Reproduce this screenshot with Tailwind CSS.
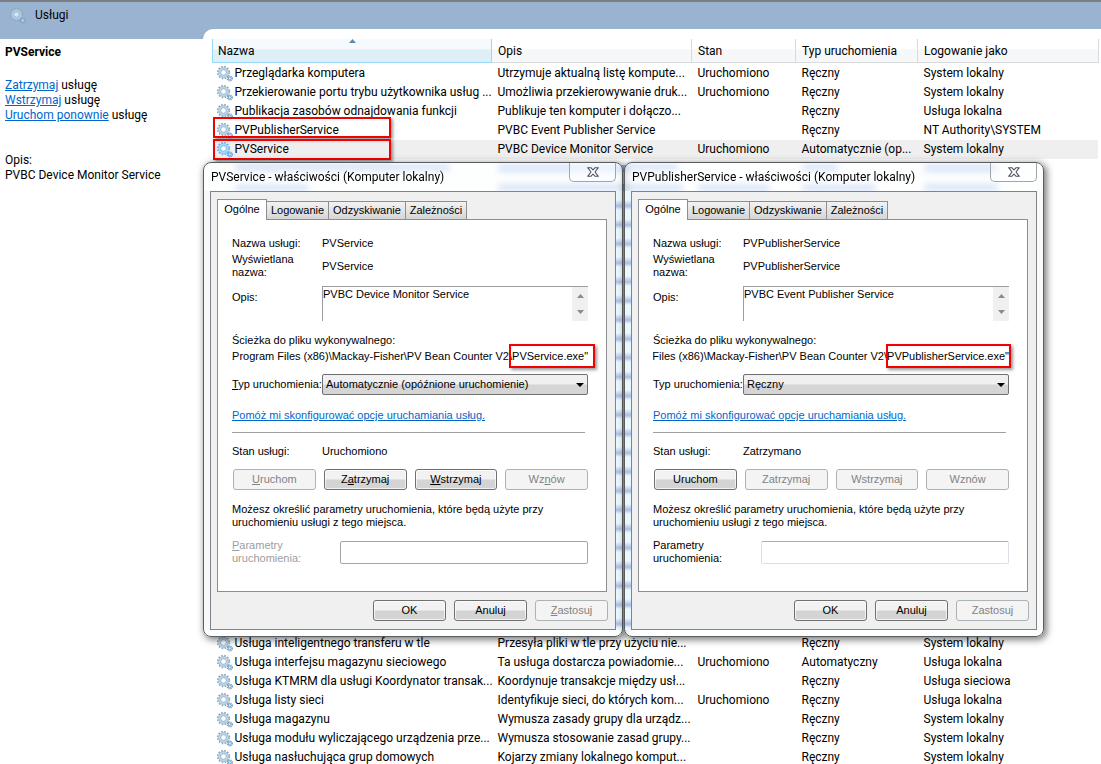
<!DOCTYPE html>
<html lang="pl">
<head>
<meta charset="utf-8">
<title>Usługi</title>
<script src="https://cdn.jsdelivr.net/npm/@tailwindcss/browser@4"></script>
</head>
<body class="relative h-screen overflow-hidden bg-white font-['Roboto','Noto_Sans',sans-serif] text-[12px] leading-[15px] text-black">
<svg class="hidden" aria-hidden="true">
  <symbol id="gear" viewBox="0 0 16 16">
    <circle cx="6.500" cy="6.500" r="5.800" fill="none" stroke="#8aa6bf" stroke-width="1.800" stroke-dasharray="1.600 1.440"/>
    <circle cx="6.500" cy="6.500" r="4" fill="none" stroke="#bcd8ea" stroke-width="2.600"/>
    <circle cx="6.500" cy="6.500" r="5" fill="none" stroke="#93b1c9" stroke-width=".6"/>
    <circle cx="6.500" cy="6.500" r="2.800" fill="#fff" fill-opacity=".8" stroke="#7f9fbb" stroke-width=".7"/>
    <circle cx="12.800" cy="12.400" r="2.500" fill="none" stroke="#6f96b8" stroke-width="1.200" stroke-dasharray="1.100 .94"/>
    <circle cx="12.800" cy="12.400" r="1.500" fill="#e4f1f9" stroke="#86b2d4" stroke-width="1.300"/>
  </symbol>
  <symbol id="close" viewBox="0 0 12 10">
    <path d="M.7.7h3.2L6 3 8.100.7h3.200L8 5l3.300 4.300H8.100L6 7 3.900 9.300H.7L4 5z" fill="#fff" stroke="#4b5060" stroke-width="1.100" stroke-linejoin="round"/>
  </symbol>
</svg>

<header class="flex h-[39px] items-start border-t-2 border-[#7d8083] bg-[#9ab3d1] pt-[6px] pl-[10px]">
  <svg class="size-4 opacity-80"><use href="#gear"/></svg>
  <h1 class="ml-[9px]">Usługi</h1>
</header>

<div class="flex">
  <aside class="w-[203px] shrink-0 pt-[6px] pl-[5px]">
    <h2 class="font-bold">PVService</h2>
    <p class="mt-[18px]"><a href="#" class="text-[#0066cc] underline">Zatrzymaj</a> usługę</p>
    <p><a href="#" class="text-[#0066cc] underline">Wstrzymaj</a> usługę</p>
    <p><a href="#" class="text-[#0066cc] underline">Uruchom ponownie</a> usługę</p>
    <p class="mt-[30px]">Opis:</p>
    <p>PVBC Device Monitor Service</p>
  </aside>
  <main class="relative -mt-[10px] min-w-0 grow rounded-tl-[10px] bg-white pt-[10px] pr-[2px] pl-[9px]">
    <table class="w-full table-fixed border-collapse text-left whitespace-nowrap">
      <colgroup><col class="w-[279px]"><col class="w-[200px]"><col class="w-[104px]"><col class="w-[122px]"><col></colgroup>
      <thead>
        <tr class="h-[23px]">
          <th class="relative border border-t-0 border-[#96d9f9] bg-linear-to-b from-[#f4fafd] from-45% to-[#dfeff8] to-46% pt-[2px] pl-[5px] font-normal">Nazwa
            <svg class="absolute top-0 left-[136px] h-[4px] w-[7px]" viewBox="0 0 7 4"><path d="M0 4 3.500 0 7 4z" fill="#5a8caf"/></svg></th>
          <th class="border-r border-b border-[#d9dadc] bg-linear-to-b from-white from-45% to-[#f6f7f8] to-46% pt-[2px] pl-[6px] font-normal">Opis</th>
          <th class="border-r border-b border-[#d9dadc] bg-linear-to-b from-white from-45% to-[#f6f7f8] to-46% pt-[2px] pl-[6px] font-normal">Stan</th>
          <th class="border-r border-b border-[#d9dadc] bg-linear-to-b from-white from-45% to-[#f6f7f8] to-46% pt-[2px] pl-[6px] font-normal">Typ uruchomienia</th>
          <th class="border-r border-b border-[#d9dadc] bg-linear-to-b from-white from-45% to-[#f6f7f8] to-46% pt-[2px] pl-[6px] font-normal">Logowanie jako</th>
        </tr>
      </thead>
      <tbody id="services"></tbody>
    </table>
    <div class="absolute top-[88px] left-[10px] h-[21px] w-[178px] border-2 border-[#f40000] shadow-[2px_2px_3px_rgba(0,0,0,0.4)]"></div>
    <div class="absolute top-[110px] left-[10px] h-[21px] w-[178px] border-2 border-[#f40000] shadow-[2px_2px_3px_rgba(0,0,0,0.4)]"></div>
  </main>
</div>

<div id="dialogs"></div>

<script>
const services = [
  ["Przeglądarka komputera", "Utrzymuje aktualną listę kompute...", "Uruchomiono", "Ręczny", "System lokalny"],
  ["Przekierowanie portu trybu użytkownika usług ...", "Umożliwia przekierowywanie druk...", "Uruchomiono", "Ręczny", "System lokalny"],
  ["Publikacja zasobów odnajdowania funkcji", "Publikuje ten komputer i dołączo...", "", "Ręczny", "Usługa lokalna"],
  ["PVPublisherService", "PVBC Event Publisher Service", "", "Ręczny", "NT Authority\\SYSTEM"],
  ["PVService", "PVBC Device Monitor Service", "Uruchomiono", "Automatycznie (op...", "System lokalny"],
  ["w-[215px]", "w-[180px]", "w-0", "w-[36px]", "w-[74px]"],
  ["w-[74px]", "w-[185px]", "w-[72px]", "w-[74px]", "w-[74px]"],
  null,
  ["Usługa inteligentnego transferu w tle", "Przesyła pliki w tle przy użyciu nie...", "", "Ręczny", "System lokalny"],
  ["Usługa interfejsu magazynu sieciowego", "Ta usługa dostarcza powiadomie...", "Uruchomiono", "Automatyczny", "Usługa lokalna"],
  ["Usługa KTMRM dla usługi Koordynator transak...", "Koordynuje transakcje między usł...", "", "Ręczny", "Usługa sieciowa"],
  ["Usługa listy sieci", "Identyfikuje sieci, do których kom...", "Uruchomiono", "Ręczny", "Usługa lokalna"],
  ["Usługa magazynu", "Wymusza zasady grupy dla urządz...", "", "Ręczny", "System lokalny"],
  ["Usługa modułu wyliczającego urządzenia prze...", "Wymusza stosowanie zasad grupy...", "", "Ręczny", "System lokalny"],
  ["Usługa nasłuchująca grup domowych", "Kojarzy zmiany lokalnego komput...", "", "Ręczny", "System lokalny"],
];

// Rows 5 and 6 only show as soft bars through the title bars' glass;
// the rows covered by the dialogs collapse into one spacer row.
const rowHtml = (s, i) => {
  if (!s) return '<tr class="h-[437px]"><td colspan="5" class="p-0"></td></tr>';
  if (i === 5 || i === 6) return `<tr class="h-[19px]" aria-hidden="true">${s.map((w, k) =>
    `<td class="p-0 ${k ? "pl-[6px]" : "pl-[22px]"}"><div class="h-[7px] ${w} rounded-full bg-[#a3c0f2]"></div></td>`).join("")}</tr>`;
  return `
  <tr class="h-[19px] ${i === 4 ? "bg-[#efefef]" : ""}">
    <td class="overflow-hidden p-0 pl-[4px]"><div class="flex items-center gap-[2px]"><svg class="size-4 shrink-0 ${i === 4 ? "saturate-200" : ""}"><use href="#gear"/></svg><span>${s[0]}</span></div></td>
    ${s.slice(1).map(c => `<td class="p-0 pl-[6px]">${c}</td>`).join("")}
  </tr>`;
};
document.getElementById("services").innerHTML =
  '<tr class="h-[2px]"><td colspan="5" class="p-0"></td></tr>' + services.map(rowHtml).join("");

const dialogs = [
  { id: "a", place: "left-[203px]", name: "PVService", desc: "PVBC Device Monitor Service",
    path: 'C:\\Program Files (x86)\\Mackay-Fisher\\PV Bean Counter V2\\PVService.exe"',
    mark: "w-[86px] -right-[7px]", type: "Automatycznie (opóźnione uruchomienie)", typeLabel: "<u>T</u>yp uruchomienia:", state: "Uruchomiono",
    actions: [["<u>U</u>ruchom", 0], ["Z<u>a</u>trzymaj", 1], ["<u>W</u>strzymaj", 1], ["Wz<u>n</u>ów", 0]],
    params: "<u>P</u>arametry<br>uruchomienia:", paramsTone: "text-[#9d9d9d]", paramsBorder: "border-[#a5a5a8]", apply: "<u>Z</u>astosuj",
    left: "bg-[#f6f8f9]", right: "bg-[repeating-linear-gradient(#eaf8fd_0px,#eaf8fd_9px,#a9bfe4_15px,#eaf8fd_19px)]" },
  { id: "b", place: "left-[624px]", name: "PVPublisherService", desc: "PVBC Event Publisher Service",
    path: 'C:\\Program Files (x86)\\Mackay-Fisher\\PV Bean Counter V2\\PVPublisherService.exe"',
    mark: "w-[125px] -right-[2px]", type: "Ręczny", typeLabel: "Typ uruchomienia:", state: "Zatrzymano",
    actions: [["Uruchom", 1], ["Zatrzymaj", 0], ["Wstrzymaj", 0], ["Wznów", 0]],
    params: "Parametry<br>uruchomienia:", paramsTone: "text-black", paramsBorder: "border-[#dcdfe6] border-t-[#a9abb4]", apply: "Zastosuj",
    left: "bg-[repeating-linear-gradient(#eaf8fd_0px,#eaf8fd_9px,#a9bfe4_15px,#eaf8fd_19px)]", right: "bg-[#fafafa]" },
];

const button = (label, on) => `<button type="button" ${on ? "" : "disabled"} class="h-[21px] rounded-[3px] border text-center ${on
  ? "border-[#707070] bg-linear-to-b from-[#f2f2f2] from-48% to-[#d4d4d4] to-52% shadow-[inset_0_0_0_1px_rgba(255,255,255,0.7)]"
  : "border-[#adb2b5] bg-[#f4f4f4] text-[#838383]"}">${label}</button>`;

document.getElementById("dialogs").innerHTML = dialogs.map(d => `
<section role="dialog" aria-labelledby="title-${d.id}" class="absolute top-[162px] ${d.place} w-[420px] overflow-clip rounded-[8px] border border-[#5a5d5f] bg-[#fbfdfe]/60 backdrop-blur-[3px] shadow-[2px_2px_7px_1px_rgba(0,0,0,0.5)]">
  <div class="flex h-[28px] items-start justify-between pr-[6px] pl-[7px]">
    <h2 id="title-${d.id}" class="mt-[7px] [text-shadow:0_0_6px_#fff,0_0_6px_#fff,0_0_4px_#fff,0_0_8px_#fff]">${d.name} - właściwości (Komputer lokalny)</h2>
    <button type="button" aria-label="Zamknij" class="flex h-[19px] w-[47px] items-center justify-center rounded-b-[5px] border border-t-0 border-[#a0a5aa] bg-white/40"><svg class="h-[10px] w-[12px]"><use href="#close"/></svg></button>
  </div>
  <div class="flex font-['Liberation_Sans',sans-serif] text-[11px] leading-[13px]">
    <div class="w-[6px] shrink-0 ${d.left}"></div>
    <div class="min-w-0 grow border border-[#808489] bg-[#f0f0f0] px-[6px] pt-[7px] pb-[8px]">
      <div role="tablist" class="flex items-end">
        <button type="button" role="tab" aria-selected="true" class="relative -mb-px h-[21px] w-[50px] border border-b-0 border-[#8c8e94] bg-white pb-[2px]">Ogólne</button>
        <button type="button" role="tab" class="h-[18px] w-[62px] border border-b-0 border-l-0 border-[#8c8e94] bg-linear-to-b from-[#f2f2f2] to-[#d6d6d6]">Logowanie</button>
        <button type="button" role="tab" class="h-[18px] w-[77px] border border-b-0 border-l-0 border-[#8c8e94] bg-linear-to-b from-[#f2f2f2] to-[#d6d6d6]">Odzyskiwanie</button>
        <button type="button" role="tab" class="h-[18px] w-[61px] border border-b-0 border-l-0 border-[#8c8e94] bg-linear-to-b from-[#f2f2f2] to-[#d6d6d6]">Zależności</button>
      </div>
      <div role="tabpanel" class="mr-[2px] border border-[#8c8e94] bg-white pt-[17px] pr-[18px] pb-[26px] pl-[14px]">
        <div class="flex"><span class="w-[90px]">Nazwa usługi:</span><span>${d.name}</span></div>
        <div class="mt-[3px] flex items-center"><span class="w-[90px]">Wyświetlana<br>nazwa:</span><span>${d.name}</span></div>
        <div class="mt-[7px] flex">
          <label for="desc-${d.id}" class="w-[90px] pt-[5px]">Opis:</label>
          <div class="flex h-[35px] grow">
            <textarea id="desc-${d.id}" readonly class="h-full min-w-0 grow resize-none overflow-hidden border-t border-l border-[#9a9da2] pt-px">${d.desc}</textarea>
            <div class="flex w-[16px] flex-col items-center justify-between border-t border-t-[#9a9da2] bg-[#f0f0f0] py-[7px]">
              <svg class="h-[4px] w-[7px]" viewBox="0 0 7 4"><path d="M0 4 3.500 0 7 4z" fill="#8a8a8a"/></svg>
              <svg class="h-[4px] w-[7px]" viewBox="0 0 7 4"><path d="M0 0h7L3.500 4z" fill="#8a8a8a"/></svg>
            </div>
          </div>
        </div>
        <label for="path-${d.id}" class="mt-[13px] block">Ścieżka do pliku wykonywalnego:</label>
        <div class="relative mt-[2px]">
          <input id="path-${d.id}" data-path readonly value="${d.path.replace('"', "&quot;")}" class="block h-[14px] w-full">
          <div class="absolute -top-[5px] ${d.mark} h-[24px] border-2 border-[#f40000] shadow-[2px_2px_3px_rgba(0,0,0,0.4)]"></div>
        </div>
        <div class="relative mt-[11px] flex items-center">
          <label for="type-${d.id}" class="w-[90px] shrink-0 whitespace-nowrap">${d.typeLabel}</label>
          <select id="type-${d.id}" class="h-[21px] w-full min-w-0 appearance-none rounded-[2px] border border-[#707070] bg-linear-to-b from-[#f0f0f0] from-48% to-[#d5d5d5] to-52% pl-[3px]"><option>${d.type}</option></select>
          <svg class="pointer-events-none absolute right-[4px] h-[4px] w-[8px]" viewBox="0 0 8 4"><path d="M0 0h8L4 4z"/></svg>
        </div>
        <a href="#" class="mt-[14px] block whitespace-nowrap text-[#0066cc] underline">Pomóż mi skonfigurować opcje uruchamiania usług.</a>
        <hr class="mt-[10px] mr-[3px] border-[#a0a0a0]">
        <div class="mt-[12px] flex"><span class="w-[90px]">Stan usługi:</span><span>${d.state}</span></div>
        <div class="mt-[11px] grid grid-cols-4 gap-2 pl-px">${d.actions.map(a => button(a[0], a[1])).join("")}</div>
        <p class="mt-[13px]">Możesz określić parametry uruchomienia, które będą użyte przy<br>uruchomieniu usługi z tego miejsca.</p>
        <div class="mt-[10px] flex items-center">
          <label for="params-${d.id}" class="w-[108px] ${d.paramsTone}">${d.params}</label>
          <input id="params-${d.id}" ${d.id === "a" ? "disabled" : ""} class="h-[23px] min-w-0 grow rounded-[2px] border bg-white px-1 ${d.paramsBorder}">
        </div>
      </div>
      <div class="mt-[8px] mr-px grid grid-cols-[repeat(3,73px)] justify-end gap-2">
        ${button("OK", 1)}${button("Anuluj", 1)}${button(d.apply, 0)}
      </div>
    </div>
    <div class="w-[6px] shrink-0 ${d.right}"></div>
  </div>
  <div class="h-[6px]"></div>
</section>`).join("");

// The path fields are scrolled to their end, where the file name is.
document.querySelectorAll("[data-path]").forEach(i => { i.scrollLeft = i.scrollWidth; });
</script>
</body>
</html>
